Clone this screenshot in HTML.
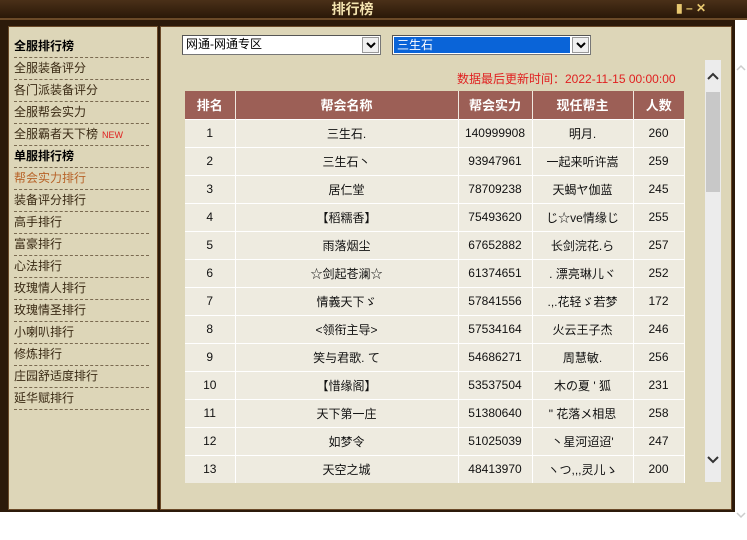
<!DOCTYPE html>
<html><head><meta charset="utf-8"><style>
*{margin:0;padding:0;box-sizing:border-box}
body{width:747px;height:540px;overflow:hidden;background:#fff;font-family:"Liberation Sans","Noto Sans CJK SC",sans-serif;font-size:12px;position:relative}
.abs{position:absolute}
#title{left:0;top:0;width:747px;height:20px;background:linear-gradient(#4a3018,#2a1808);border-bottom:2px solid #6b4a28}
#title .t{left:0;width:705px;top:0;text-align:center;color:#f4e4b0;font-weight:bold;font-size:14px;line-height:18px}
#frame{left:0;top:20px;width:735px;height:492px;background:#2c1a0a}
#left{left:8px;top:26px;width:150px;height:484px;background:#ddd6b8;border:1px solid #6b4a28}
#right{left:160px;top:26px;width:572px;height:484px;background:#ddd6b8;border:1px solid #6b4a28}
.mi{position:absolute;left:5px;width:135px;height:22px;line-height:21px;border-bottom:1px dashed #7a6a50;color:#3a2a14;font-size:12px}
.mi.b{font-weight:bold;color:#000}
.mi.a{color:#b8642a}
.new{color:#e02020;font-size:9px;margin-left:4px}
.sel{position:absolute;height:20px;border:1px solid #777;border-top-color:#555;border-left-color:#555;background:#fff;font-size:12px;line-height:17px;padding-left:3px}
.dd{position:absolute;right:1px;top:1px;width:17px;height:16px;background:#f0f0f0;border:1px solid #999}
.dd svg{position:absolute;left:3px;top:4px}
table{position:absolute;left:185px;top:91px;border-collapse:collapse;font-size:12px}
th{background:#9c5f56;color:#fff;height:28px;font-size:13px;border-right:1px solid #f0e8e0}
td{background:#eeebe0;height:28px;text-align:center;border-right:1px solid #fff;border-top:1px solid #fff;color:#111}
#sb{left:705px;top:60px;width:16px;height:422px;background:#ececec}
#thumb{left:706px;top:92px;width:14px;height:100px;background:#c8c8c8}
#osb{left:735px;top:20px;width:12px;height:520px;background:#fff}
</style></head><body>
<div id="title" class="abs"><div class="abs t">排行榜</div>
<div class="abs" style="left:676px;top:1px;color:#e8c870;font-size:12px;font-weight:bold">▮&nbsp;–&nbsp;✕</div></div>
<div id="frame" class="abs"></div>
<div id="left" class="abs">
<div class="mi b" style="top:9px">全服排行榜</div>
<div class="mi" style="top:31px">全服装备评分</div>
<div class="mi" style="top:53px">各门派装备评分</div>
<div class="mi" style="top:75px">全服帮会实力</div>
<div class="mi" style="top:97px">全服霸者天下榜<span class="new">NEW</span></div>
<div class="mi b" style="top:119px">单服排行榜</div>
<div class="mi a" style="top:141px">帮会实力排行</div>
<div class="mi" style="top:163px">装备评分排行</div>
<div class="mi" style="top:185px">高手排行</div>
<div class="mi" style="top:207px">富豪排行</div>
<div class="mi" style="top:229px">心法排行</div>
<div class="mi" style="top:251px">玫瑰情人排行</div>
<div class="mi" style="top:273px">玫瑰情圣排行</div>
<div class="mi" style="top:295px">小喇叭排行</div>
<div class="mi" style="top:317px">修炼排行</div>
<div class="mi" style="top:339px">庄园舒适度排行</div>
<div class="mi" style="top:361px">延华赋排行</div>
</div>
<div id="right" class="abs"></div>
<div class="sel" style="left:182px;top:35px;width:199px">网通-网通专区<div class="dd"><svg width="10" height="7"><path d="M1 1L5 5L9 1" stroke="#000" stroke-width="2" fill="none"/></svg></div></div>
<div class="sel" style="left:392px;top:35px;width:199px;padding:1px"><div style="background:#0a64d8;color:#fff;width:176px;height:16px;line-height:16px;padding-left:3px">三生石</div><div class="dd"><svg width="10" height="7"><path d="M1 1L5 5L9 1" stroke="#000" stroke-width="2" fill="none"/></svg></div></div>
<div class="abs" style="left:457px;top:70px;color:#e02020;font-size:12px">数据最后更新时间：2022-11-15 00:00:00</div>
<table>
<tr><th style="width:50px">排名</th><th style="width:223px">帮会名称</th><th style="width:74px">帮会实力</th><th style="width:101px">现任帮主</th><th style="width:51px;border-right:0">人数</th></tr>
<tr><td>1</td><td>三生石.</td><td>140999908</td><td>明月.</td><td>260</td></tr>
<tr><td>2</td><td>三生石丶</td><td>93947961</td><td>一起来听许嵩</td><td>259</td></tr>
<tr><td>3</td><td>居仁堂</td><td>78709238</td><td>天蝎ヤ伽蓝</td><td>245</td></tr>
<tr><td>4</td><td>【稻糯香】</td><td>75493620</td><td>じ☆ve情缘じ</td><td>255</td></tr>
<tr><td>5</td><td>雨落烟尘</td><td>67652882</td><td>长剑浣花.ら</td><td>257</td></tr>
<tr><td>6</td><td>☆剑起苍澜☆</td><td>61374651</td><td>. 漂亮琳儿ヾ</td><td>252</td></tr>
<tr><td>7</td><td>情義天下ゞ</td><td>57841556</td><td>.,.花轻ゞ若梦</td><td>172</td></tr>
<tr><td>8</td><td>&lt;领衔主导&gt;</td><td>57534164</td><td>火云王子杰</td><td>246</td></tr>
<tr><td>9</td><td>笑与君歌. て</td><td>54686271</td><td>周慧敏.</td><td>256</td></tr>
<tr><td>10</td><td>【惜缘阁】</td><td>53537504</td><td>木の夏 ' 狐</td><td>231</td></tr>
<tr><td>11</td><td>天下第一庄</td><td>51380640</td><td>" 花落メ相思</td><td>258</td></tr>
<tr><td>12</td><td>如梦令</td><td>51025039</td><td>丶星河迢迢'</td><td>247</td></tr>
<tr><td>13</td><td>天空之城</td><td>48413970</td><td>ヽつ,,,灵儿ゝ</td><td>200</td></tr>
</table>
<div id="sb" class="abs"></div><div id="thumb" class="abs"></div>
<svg class="abs" style="left:707px;top:72px" width="12" height="8"><path d="M1 7L6 2L11 7" stroke="#333" stroke-width="2" fill="none"/></svg>
<svg class="abs" style="left:707px;top:456px" width="12" height="8"><path d="M1 1L6 6L11 1" stroke="#333" stroke-width="2" fill="none"/></svg>
<div id="osb" class="abs"></div>
<svg class="abs" style="left:736px;top:64px" width="10" height="7"><path d="M1 6L5 2L9 6" stroke="#ccc" stroke-width="1.5" fill="none"/></svg>
<svg class="abs" style="left:736px;top:512px" width="10" height="7"><path d="M1 1L5 5L9 1" stroke="#ccc" stroke-width="1.5" fill="none"/></svg>
</body></html>
